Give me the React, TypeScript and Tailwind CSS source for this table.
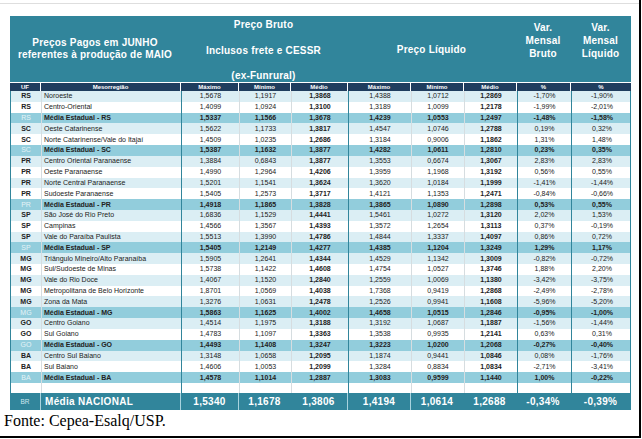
import React from "react"

type Row = {
  uf: string
  meso: string
  v: string[]
  kind: "l" | "w" | "a"
}

const COLS = "grid grid-cols-[30px_140px_58px_52px_57px_63px_53px_53px_54px_61px]"

const raw: [string, string, string][] = [
  ["RS", "Noroeste", "1,5678 1,1917 1,3868 1,4388 1,0712 1,2869 -1,70% -1,90%"],
  ["RS", "Centro-Oriental", "1,4099 1,0924 1,3100 1,3189 1,0099 1,2178 -1,99% -2,01%"],
  ["RS", "Média Estadual - RS", "1,5337 1,1566 1,3678 1,4239 1,0553 1,2497 -1,48% -1,58%"],
  ["SC", "Oeste Catarinense", "1,5622 1,1733 1,3817 1,4547 1,0746 1,2788 0,19% 0,32%"],
  ["SC", "Norte Catarinense/Vale do Itajaí", "1,4509 1,0235 1,2686 1,3184 0,9006 1,1862 1,31% 1,48%"],
  ["SC", "Média Estadual - SC", "1,5387 1,1632 1,3877 1,4282 1,0611 1,2810 0,23% 0,35%"],
  ["PR", "Centro Oriental Paranaense", "1,3884 0,6843 1,3877 1,3553 0,6674 1,3067 2,83% 2,83%"],
  ["PR", "Oeste Paranaense", "1,4990 1,2964 1,4206 1,3959 1,1968 1,3192 0,56% 0,55%"],
  ["PR", "Norte Central Paranaense", "1,5201 1,1541 1,3624 1,3620 1,0184 1,1999 -1,41% -1,44%"],
  ["PR", "Sudoeste Paranaense", "1,5405 1,2573 1,3717 1,4121 1,1353 1,2471 -0,84% -0,66%"],
  ["PR", "Média Estadual - PR", "1,4918 1,1865 1,3828 1,3865 1,0890 1,2898 0,53% 0,55%"],
  ["SP", "São José do Rio Preto", "1,6836 1,1529 1,4441 1,5461 1,0272 1,3120 2,02% 1,53%"],
  ["SP", "Campinas", "1,4566 1,3567 1,4393 1,3572 1,2654 1,3113 0,37% -0,19%"],
  ["SP", "Vale do Paraíba Paulista", "1,5513 1,3990 1,4786 1,4844 1,3337 1,4097 0,86% 0,72%"],
  ["SP", "Média Estadual - SP", "1,5405 1,2149 1,4277 1,4385 1,1204 1,3249 1,29% 1,17%"],
  ["MG", "Triângulo Mineiro/Alto Paranaíba", "1,5905 1,2641 1,4344 1,4529 1,1342 1,3009 -0,82% -0,72%"],
  ["MG", "Sul/Sudoeste de Minas", "1,5738 1,1422 1,4608 1,4754 1,0527 1,3746 1,88% 2,20%"],
  ["MG", "Vale do Rio Doce", "1,4067 1,1520 1,2840 1,2559 1,0069 1,1380 -3,42% -3,75%"],
  ["MG", "Metropolitana de Belo Horizonte", "1,8701 1,0569 1,4038 1,7368 0,9419 1,2868 -2,49% -2,78%"],
  ["MG", "Zona da Mata", "1,3276 1,0631 1,2478 1,2526 0,9941 1,1608 -5,96% -5,20%"],
  ["MG", "Média Estadual - MG", "1,5863 1,1625 1,4002 1,4658 1,0515 1,2846 -0,95% -1,00%"],
  ["GO", "Centro Goiano", "1,4514 1,1975 1,3188 1,3192 1,0687 1,1887 -1,56% -1,44%"],
  ["GO", "Sul Goiano", "1,4783 1,1097 1,3363 1,3538 0,9935 1,2141 0,63% 0,31%"],
  ["GO", "Média Estadual - GO", "1,4493 1,1408 1,3247 1,3223 1,0200 1,2068 -0,27% -0,40%"],
  ["BA", "Centro Sul Baiano", "1,3148 1,0658 1,2095 1,1874 0,9441 1,0846 0,08% -1,76%"],
  ["BA", "Sul Baiano", "1,4606 1,0053 1,2099 1,3284 0,8834 1,0834 -2,71% -3,41%"],
  ["BA", "Média Estadual - BA", "1,4578 1,1014 1,2887 1,3083 0,9599 1,1440 1,00% -0,22%"],
]

// stripes restart after each state average
const rows: Row[] = (() => {
  let n = 0
  return raw.map(([uf, meso, vals]) => {
    const avg = meso.startsWith("Média")
    const kind: Row["kind"] = avg ? "a" : n % 2 === 0 ? "l" : "w"
    n = avg ? 0 : n + 1
    return { uf, meso, v: vals.split(" "), kind }
  })
})()

const bg = { l: "bg-[#dbeef4]", w: "bg-white", a: "bg-[#92cddc]" }

// left border of each column after the first
const sep = [
  "",
  "border-l border-[#d6dde0]",
  "border-l border-[#31859b]",
  "border-l border-[#d6dde0]",
  "border-l border-[#d6dde0]",
  "border-l border-[#31859b]",
  "border-l border-[#d6dde0]",
  "border-l border-[#d6dde0]",
  "border-l border-[#31859b]",
  "border-l border-[#31859b]",
]

const boldCols = [4, 7]

function DataRow({ row }: { row: Row }) {
  const avg = row.kind === "a"
  return (
    <div className={`${COLS} h-[10.82px] ${bg[row.kind]} text-[7px] leading-[10px] text-[#222]`}>
      <div className={`flex items-center justify-center font-bold ${avg ? "text-[#e4f3f7] font-normal" : ""}`}>
        {row.uf}
      </div>
      <div className={`${sep[1]} flex items-center pl-[2px] whitespace-nowrap ${avg ? "font-bold" : ""}`}>
        {row.meso}
      </div>
      {row.v.map((val, i) => (
        <div
          key={i}
          className={`${sep[i + 2]} flex items-center justify-center ${avg || boldCols.includes(i + 2) ? "font-bold" : ""}`}
        >
          {val}
        </div>
      ))}
    </div>
  )
}

export default function App() {
  const heads = ["UF", "Mesorregião", "Máximo", "Mínimo", "Médio", "Máximo", "Mínimo", "Médio", "%", "%"]
  const br = ["1,5340", "1,1678", "1,3806", "1,4194", "1,0614", "1,2688", "-0,34%", "-0,39%"]
  const brSep = ["border-l border-[#a9d3de]", "border-l border-[#a9d3de]", "", "border-l border-[#a9d3de]", "border-l border-[#a9d3de]", "", "", ""]

  return (
    <div className="w-[641px] h-[438px] bg-white border-r-2 border-b-2 border-black font-['Liberation_Sans',Arial,sans-serif] overflow-hidden">
      <div className="mt-[3px] border-t border-[#dedede]" />
      <div className="ml-[10px] mt-[12px] w-[621px]">
        {/* title band */}
        <div className={`${COLS} h-[66px] bg-[#31859b] text-white font-bold text-[10px]`}>
          <div className="col-span-2 flex flex-col items-center justify-center leading-[12px] tracking-[0.2px]">
            <div>Preços Pagos em JUNHO</div>
            <div>referentes à produção de MAIO</div>
          </div>
          <div className="col-span-3 flex flex-col items-center tracking-[0.2px]">
            <div className="h-[16px] flex items-center">Preço Bruto</div>
            <div className="h-[36px] flex items-center">Inclusos frete e CESSR</div>
            <div className="h-[14px] flex items-center">(ex-Funrural)</div>
          </div>
          <div className="col-span-3 flex items-center justify-center tracking-[0.2px]">Preço Líquido</div>
          <div className="flex flex-col items-center pt-[5px] leading-[13px] text-center tracking-[0.2px]">
            <div>Var.</div>
            <div>Mensal</div>
            <div>Bruto</div>
          </div>
          <div className="flex flex-col items-center pt-[5px] leading-[13px] text-center tracking-[0.2px]">
            <div>Var.</div>
            <div>Mensal</div>
            <div>Líquido</div>
          </div>
        </div>

        {/* column heads */}
        <div className={`${COLS} h-[8px] mt-[1px] bg-[#1f3d5e] text-white font-bold text-[6px] leading-[8px]`}>
          {heads.map((h, i) => (
            <div key={i} className={`text-center ${i > 0 ? "border-l border-white" : ""}`}>
              {h}
            </div>
          ))}
        </div>

        <div className="border-l border-r border-[#31859b]">
          {rows.map((r, i) => (
            <DataRow key={i} row={r} />
          ))}
          <div className={`${COLS} h-[10px] bg-white`}>
            {sep.map((s, i) => (
              <div key={i} className={s} />
            ))}
          </div>
        </div>

        {/* national average */}
        <div className={`${COLS} h-[17px] bg-[#31859b] text-white`}>
          <div className="flex items-center justify-center text-[6.5px] text-[#cfe8ef]">BR</div>
          <div className="border-l border-[#a9d3de] flex items-center pl-[4px] text-[10px] font-bold tracking-[0.3px]">
            Média NACIONAL
          </div>
          {br.map((v, i) => (
            <div key={i} className={`${brSep[i]} flex items-center justify-center text-[10px] font-bold tracking-[0.3px]`}>
              {v}
            </div>
          ))}
        </div>
      </div>
      <div className="ml-[4px] mt-[2px] font-['Liberation_Serif','Times_New_Roman',serif] text-[16px] leading-[18px] text-black">
        Fonte: Cepea-Esalq/USP.
      </div>
    </div>
  )
}
